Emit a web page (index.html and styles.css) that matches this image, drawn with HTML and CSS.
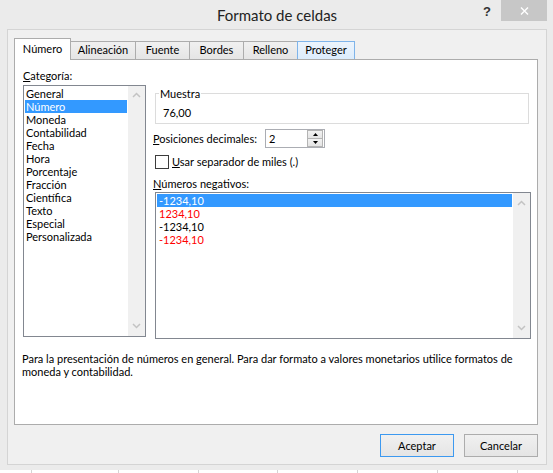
FILE: index.html
```html
<!DOCTYPE html>
<html lang="es">
<head>
<meta charset="utf-8">
<title>Formato de celdas</title>
<link rel="stylesheet" href="styles.css">
</head>
<body>
<div class="window">
  <div class="titlebar">
    <div class="title">Formato de celdas</div>
    <div class="controls">
      <div class="help">?</div>
      <div class="close"><svg width="9" height="8" viewBox="0 0 9 8"><path d="M1 0.5 L8 7.5 M8 0.5 L1 7.5" stroke="#fff" stroke-width="1.4" fill="none"/></svg></div>
    </div>
  </div>
  <div class="client">
    <div class="tabs">
      <div class="tab active t1">Número</div>
      <div class="tab t2">Alineación</div>
      <div class="tab t3">Fuente</div>
      <div class="tab t4">Bordes</div>
      <div class="tab t5">Relleno</div>
      <div class="tab hover t6">Proteger</div>
    </div>
    <div class="panel">
      <div class="cols">
        <div class="leftcol">
          <div class="label"><u>C</u>ategoría:</div>
          <div class="listbox catlist">
            <ul class="items">
              <li>General</li>
              <li class="sel">Número</li>
              <li>Moneda</li>
              <li>Contabilidad</li>
              <li>Fecha</li>
              <li>Hora</li>
              <li>Porcentaje</li>
              <li>Fracción</li>
              <li>Científica</li>
              <li>Texto</li>
              <li>Especial</li>
              <li>Personalizada</li>
            </ul>
            <div class="vscroll">
              <svg width="9" height="6" viewBox="0 0 9 6"><polyline points="1,5 4.5,1.5 8,5" fill="none" stroke="#c3c3c3" stroke-width="1.5"/></svg>
              <svg width="9" height="6" viewBox="0 0 9 6"><polyline points="1,1 4.5,4.5 8,1" fill="none" stroke="#c3c3c3" stroke-width="1.5"/></svg>
            </div>
          </div>
        </div>
        <div class="rightcol">
          <div class="group">
            <div class="legend">Muestra</div>
            <div class="sample">76,00</div>
          </div>
          <div class="row decimals">
            <div class="rlabel dlabel"><u>P</u>osiciones decimales:</div>
            <div class="spin">
              <div class="spinval">2</div>
              <div class="spinbtns">
                <div class="sbtn"><svg width="5" height="3" viewBox="0 0 5 3"><polygon points="0,3 2.5,0 5,3" fill="#000"/></svg></div>
                <div class="sbtn"><svg width="5" height="3" viewBox="0 0 5 3"><polygon points="0,0 2.5,3 5,0" fill="#000"/></svg></div>
              </div>
            </div>
          </div>
          <div class="row check">
            <span class="box"></span>
            <span class="clabel"><u>U</u>sar separador de miles (.)</span>
          </div>
          <div class="rlabel neglabel"><u>N</u>úmeros negativos:</div>
          <div class="listbox neglist">
            <ul class="items">
              <li class="sel">-1234,10</li>
              <li class="red">1234,10</li>
              <li>-1234,10</li>
              <li class="red">-1234,10</li>
            </ul>
            <div class="vscroll">
              <svg width="9" height="6" viewBox="0 0 9 6"><polyline points="1,5 4.5,1.5 8,5" fill="none" stroke="#c3c3c3" stroke-width="1.5"/></svg>
              <svg width="9" height="6" viewBox="0 0 9 6"><polyline points="1,1 4.5,4.5 8,1" fill="none" stroke="#c3c3c3" stroke-width="1.5"/></svg>
            </div>
          </div>
        </div>
      </div>
      <p class="desc">Para la presentación de números en general. Para dar formato a valores monetarios utilice formatos de<br>moneda y contabilidad.</p>
    </div>
    <div class="buttons">
      <button class="btn default">Aceptar</button>
      <button class="btn">Cancelar</button>
    </div>
  </div>
</div>
<div class="sheet">
  <span class="cell c0"></span><span class="cell c1"></span><span class="cell c2"></span><span class="cell c3"></span><span class="cell c4"></span><span class="cell c5"></span><span class="cell c6"></span><span class="cell c7"></span>
</div>
</body>
</html>
```
FILE: styles.css
```css
* { box-sizing: border-box; }
html, body { margin: 0; padding: 0; }
body {
  width: 553px;
  height: 473px;
  overflow: hidden;
  background: #fff;
  font-family: Lato, "Open Sans", sans-serif;
  font-size: 11px;
  line-height: 13px;
  color: #000;
}
u { text-decoration: underline; text-underline-offset: 1px; }

.window {
  width: 553px;
  height: 470px;
  background: #ebebeb;
  display: flex;
  flex-direction: column;
  padding: 0 6px 5px 7px;
}

.titlebar {
  height: 29px;
  display: grid;
  grid-template-columns: 1fr auto 1fr;
  align-items: start;
}
.title {
  grid-column: 2;
  font-size: 15px;
  line-height: 20px;
  padding-top: 5px;
  color: #222;
}
.controls {
  grid-column: 3;
  justify-self: end;
  display: flex;
}
.help {
  width: 28px;
  height: 21px;
  text-align: center;
  font-weight: bold;
  font-size: 13px;
  line-height: 21px;
  padding-top: 1px;
  color: #333;
  font-family: "Liberation Sans", sans-serif;
}
.close {
  width: 46px;
  height: 21px;
  background: #c7c7c7;
  display: flex;
  align-items: center;
  justify-content: center;
}

.client {
  flex: 1;
  background: #f0f0f0;
  border: 1px solid #d4d4d4;
  padding: 8px 8px 7px 6px;
  display: flex;
  flex-direction: column;
}

.tabs {
  display: flex;
  align-items: flex-end;
  height: 21px;
}
.tab {
  height: 18px;
  border: 1px solid #acacac;
  border-bottom: none;
  background: linear-gradient(#f0f0f0, #e5e5e5);
  text-align: center;
  line-height: 16px;
  margin-left: -1px;
}
.tab.active {
  height: 22px;
  margin-bottom: -1px;
  margin-left: 0;
  background: #fff;
  position: relative;
  z-index: 1;
  line-height: 19px;
}
.tab.hover {
  background: linear-gradient(#ecf4fc, #dcecfc);
  border-color: #7eb4ea;
  position: relative;
}
.t1 { width: 57px; }
.t2 { width: 66px; }
.t3 { width: 55px; }
.t4 { width: 55px; }
.t5 { width: 55px; }
.t6 { width: 58px; }

.panel {
  width: 524px;
  height: 366px;
  background: #fff;
  border: 1px solid #acacac;
  padding: 9px 0 0 8px;
}
.cols {
  display: flex;
  gap: 9px;
}
.leftcol { width: 123px; }
.label { height: 13px; }
.catlist { margin-top: 3px; width: 123px; height: 252px; }

.listbox {
  display: flex;
  border: 1px solid #828790;
  background: #fff;
}
.items {
  list-style: none;
  margin: 0;
  padding: 1px;
  flex: 1;
}
.items li {
  height: 13px;
  padding-left: 1px;
  white-space: nowrap;
}
.items li.sel { background: #3399ff; color: #fff; }
.neglist .items li { padding-left: 2px; }
.items li.red { color: #ff0000; }
.vscroll {
  width: 17px;
  background: #f0f0f0;
  display: flex;
  flex-direction: column;
  justify-content: space-between;
  align-items: center;
  padding: 6px 0 7px;
}
.neglist .vscroll { padding: 7px 0 7px; }

.rightcol { width: 376px; }
.group {
  margin-top: 24px;
  width: 374px;
  height: 31px;
  border: 1px solid #dcdcdc;
  padding: 0 0 0 3px;
}
.legend {
  width: fit-content;
  margin-top: -7px;
  padding: 0 1px;
  background: #fff;
}
.sample { margin-top: 6px; padding-left: 4px; }

.row { display: flex; align-items: center; }
.rlabel { margin-left: -2px; }
.decimals { margin-top: 5px; height: 19px; }
.dlabel { width: 112px; }
.spin {
  width: 60px;
  height: 19px;
  border: 1px solid #abadb3;
  display: flex;
  background: #fff;
}
.spinval { flex: 1; padding-left: 3px; line-height: 17px; }
.spinbtns {
  width: 17px;
  display: flex;
  flex-direction: column;
  padding: 0 1px 0 0;
}
.sbtn {
  flex: 1;
  background: linear-gradient(#f2f2f2, #e4e4e4);
  border: 1px solid #b4b4b4;
  display: flex;
  align-items: center;
  justify-content: center;
}
.sbtn + .sbtn { border-top: none; }

.check { margin-top: 7px; height: 13px; }
.box {
  width: 14px;
  height: 14px;
  border: 1px solid #3c3c3c;
  background: #fff;
  margin-right: 3px;
}
.neglabel { margin-top: 9px; height: 13px; }
.neglist { margin-top: 2px; width: 376px; height: 147px; }

.desc {
  margin: 13px 0 0 -1px;
}

.buttons {
  margin-top: 9px;
  display: flex;
  justify-content: flex-end;
  gap: 10px;
  padding-right: 0;
}
.btn {
  width: 74px;
  height: 23px;
  font: inherit;
  color: #000;
  background: linear-gradient(#f0f0f0, #e5e5e5);
  border: 1px solid #acacac;
  border-radius: 0;
  padding: 0;
}
.btn.default { border-color: #3c99f0; }

.sheet {
  height: 3px;
  display: flex;
  background: #fff;
}
.cell { height: 3px; border-left: 1px solid #d4d4d4; }
.c0 { width: 31px; border-left: none; }
.c1 { width: 87px; }
.c2 { width: 80px; }
.c3 { width: 79px; }
.c4 { width: 80px; }
.c5 { width: 80px; }
.c6 { width: 80px; }
.c7 { width: 36px; }
```
